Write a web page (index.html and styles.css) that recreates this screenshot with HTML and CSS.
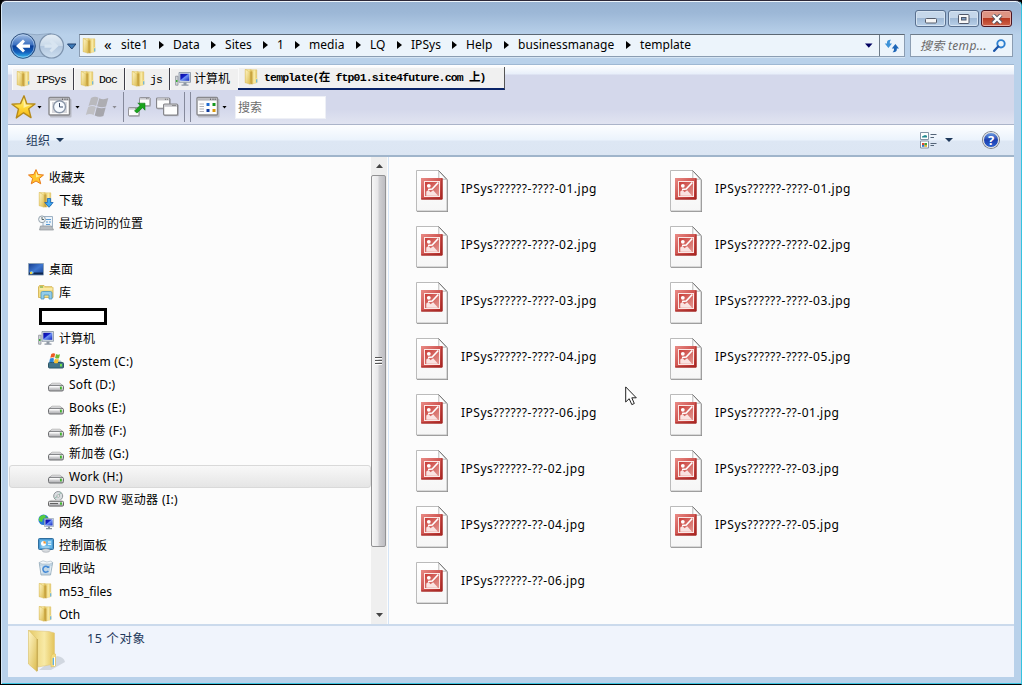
FILE: index.html
```html
<!DOCTYPE html>
<html lang="zh-CN">
<head>
<meta charset="utf-8">
<title>template</title>
<link rel="stylesheet" href="styles.css">
</head>
<body>
<svg class="defs" aria-hidden="true">
  <defs>
    <linearGradient id="gold" x1="0" y1="0" x2="1" y2="0"><stop offset="0" stop-color="#e6ca68"/><stop offset=".6" stop-color="#f8eaa6"/><stop offset="1" stop-color="#e3c35a"/></linearGradient>
    <linearGradient id="goldFront" x1="0" y1="0" x2="1" y2="1"><stop offset="0" stop-color="#fff6c8"/><stop offset="1" stop-color="#dcbc50"/></linearGradient>
    <linearGradient id="grey" x1="0" y1="0" x2="0" y2="1"><stop offset="0" stop-color="#fafafa"/><stop offset="1" stop-color="#a9a9ad"/></linearGradient>
    <linearGradient id="starFill" x1="0" y1="0" x2="0" y2="1"><stop offset="0" stop-color="#fff6a0"/><stop offset=".5" stop-color="#ffdc3c"/><stop offset="1" stop-color="#f4b012"/></linearGradient>
    <linearGradient id="screen" x1="0" y1="0" x2="1" y2="1"><stop offset="0" stop-color="#0a0a9c"/><stop offset=".4" stop-color="#1420c8"/><stop offset=".5" stop-color="#6f93f4"/><stop offset="1" stop-color="#1024c0"/></linearGradient>
    <linearGradient id="desk" x1="0" y1="0" x2="1" y2="1"><stop offset="0" stop-color="#153c8c"/><stop offset=".5" stop-color="#3f77d0"/><stop offset="1" stop-color="#17408f"/></linearGradient>
    <linearGradient id="red" x1="0" y1="0" x2="1" y2="1"><stop offset="0" stop-color="#e98a85"/><stop offset=".5" stop-color="#cf5551"/><stop offset="1" stop-color="#ac2421"/></linearGradient>
    <linearGradient id="redInner" x1="0" y1="0" x2="1" y2="1"><stop offset="0" stop-color="#c83a35"/><stop offset="1" stop-color="#e49a94"/></linearGradient>
    <linearGradient id="page" x1="0" y1="0" x2="0" y2="1"><stop offset="0" stop-color="#fff"/><stop offset="1" stop-color="#f6f6f6"/></linearGradient>
    <linearGradient id="backFill" x1="0" y1="0" x2="0" y2="1"><stop offset="0" stop-color="#a9c3e6"/><stop offset=".45" stop-color="#3a6fc0"/><stop offset=".5" stop-color="#0b3f98"/><stop offset=".75" stop-color="#1460bc"/><stop offset="1" stop-color="#38c4f6"/></linearGradient>
    <linearGradient id="fwdFill" x1="0" y1="0" x2="0" y2="1"><stop offset="0" stop-color="#e6eef6"/><stop offset=".48" stop-color="#c9d9e9"/><stop offset=".52" stop-color="#b3c7de"/><stop offset="1" stop-color="#cddff0"/></linearGradient>

    <symbol id="folder" viewBox="0 0 16 16">
      <path d="M7 .8H12.8V13.6L8 15Z" fill="url(#gold)" stroke="#e0c670" stroke-width=".5"/>
      <path d="M1.3 .4H7V13.5L1.3 13.8Z" fill="url(#gold)" stroke="#dcc068" stroke-width=".5"/>
      <path d="M1.3 .4 6 3V15.3L1.3 13.6Z" fill="url(#goldFront)" stroke="#d6b850" stroke-width=".4"/>
      <path d="M6.9 2.2 8.4 2.6V15.3L6.2 15.3V3Z" fill="#c9a440"/>
      <path d="M10.8 10Q11.5 8.6 13.3 9V13.6L10.8 14.6Z" fill="#f5e08c"/><path d="M12.7 10.2V13.6" stroke="#5fb0e4" stroke-width="1.1"/>
    </symbol>
    <symbol id="star" viewBox="0 0 16 16">
      <path d="M8 .6 10.1 5.5 15.5 6 11.3 9.5 12.7 14.8 8 12 3.3 14.8 4.6 9.5.5 6 5.8 5.5Z" fill="#ffc62e" stroke="#e87a1a" stroke-linejoin="round"/>
      <path d="M8 2.5 9.5 6.3 13 6.7 8 8.5Z" fill="#fff0a0"/>
    </symbol>
    <symbol id="download" viewBox="0 0 16 16">
      <use href="#folder" width="16" height="16"/>
      <path d="M9.4 6.5h3.2v4h2.5L11 15.3 6.8 10.5h2.6Z" fill="#3fa8f0" stroke="#1560b4" stroke-width=".8"/>
    </symbol>
    <symbol id="recent" viewBox="0 0 16 16">
      <path d="M5 1.5H14.5V12H5Z" fill="#edf4fa" stroke="#9db1c4"/>
      <path d="M2.5 11H13.5L15.5 15H1.5Z" fill="#b8bcc0" stroke="#8d9499" stroke-width=".7"/>
      <path d="M8 4.5h5M8 7h2m1 0h2M8 9.5h4" stroke="#5a9bd4"/>
      <circle cx="4" cy="4.3" r="3.4" fill="#f1f4f6" stroke="#94a2ad"/>
      <path d="M4 2v2.5h2" fill="none" stroke="#566"/>
    </symbol>
    <symbol id="desktop" viewBox="0 0 16 16">
      <path d="M.5 2.5H15.5V14H.5Z" fill="url(#desk)" stroke="#8ea3b8"/>
      <path d="M1 12.5H15" stroke="#10284e" stroke-width="2"/>
      <path d="M2 11 4 10l2 2-2 1Z" fill="#83cef4"/><circle cx="3" cy="12" r="1.2" fill="#f3d347"/>
    </symbol>
    <symbol id="library" viewBox="0 0 16 16">
      <path d="M.5 3V13.5H15V3.7L14 2.7H7L6 1.5H1.5Z" fill="#f4dd83" stroke="#ceac48" stroke-width=".8"/>
      <path d="M1.5 5H14.5" stroke="#fff6c6"/><path d="M2 3h3" stroke="#59a84b"/>
      <path d="M3 15V9Q3 7.5 4.5 7.5h8Q14 7.5 14 9v6h-3v-4H6v4Z" fill="#93cdea" stroke="#4d95bf" stroke-width=".8"/>
    </symbol>
    <symbol id="computer" viewBox="0 0 16 16">
      <path d="M.6 5.2h2.4v9H.6Z" fill="#d5d8dc" stroke="#81878f" stroke-width=".7"/><path d="M1 10h1.5" stroke="#3caf34" stroke-width="2"/>
      <path d="M4 1.5H15.5V11.3H4Z" fill="#d7dfe8" stroke="#8491a0" stroke-width=".8"/>
      <path d="M5.3 2.8h9v7h-9Z" fill="url(#screen)"/>
      <path d="M8.5 11.5h3v2h2v1.3h-7v-1.3h2Z" fill="#8e98a4"/>
    </symbol>
    <symbol id="drive" viewBox="0 0 16 16">
      <path d="M1 9.7 4 7.2h8l3 2.5Z" fill="#eeeeef" stroke="#a2a2a4" stroke-width=".7"/>
      <rect x=".5" y="9.3" width="15" height="5.7" rx="1.5" fill="url(#grey)" stroke="#6f7073"/>
      <path d="M2 10.8h9" stroke="#fff"/><rect x="12" y="10.6" width="1.8" height="2.8" fill="#41b52e"/>
    </symbol>
    <symbol id="sysdrive" viewBox="0 0 16 16">
      <path d="M1 10 3.5 7.5h9L15 10Z" fill="#9cbfca"/>
      <rect x=".5" y="9.5" width="15" height="5.5" rx="1" fill="#427488" stroke="#2e5667"/><rect x="12" y="11" width="2" height="2.5" fill="#6be04c"/>
      <path d="M3.3.9Q5.5-.3 7.2.7L6.3 4.6Q4.3 3.8 2.3 4.8Z" fill="#ee5a22"/><path d="M8 1.1Q10 2.3 12 1.3L11 5.2Q9 6 7.1 4.9Z" fill="#74b831"/><path d="M2 5.6Q4.2 4.6 6 5.5L5.1 9.5Q3 8.7 1.2 9.6Z" fill="#2b86d8"/><path d="M6.9 5.8Q8.8 6.8 10.8 6L9.8 9.9Q7.8 10.7 6 9.7Z" fill="#fac02d"/>
    </symbol>
    <symbol id="dvd" viewBox="0 0 16 16">
      <circle cx="10.2" cy="5" r="4.5" fill="#d9dde0" stroke="#909699"/><path d="M10.2 5 13 1.5M10.2 5 7 7" stroke="#8cc3ac"/><circle cx="10.2" cy="5" r="1.3" fill="#fff" stroke="#888" stroke-width=".6"/>
      <path d="M1 11 3 8.7h10l2 2.3Z" fill="#ddd"/><rect x=".5" y="10.3" width="15" height="4.8" rx="1" fill="url(#grey)" stroke="#666"/><path d="M2 12.6h8" stroke="#555"/><rect x="12" y="11.4" width="2" height="2.3" fill="#41b52e"/>
    </symbol>
    <symbol id="network" viewBox="0 0 16 16">
      <circle cx="5.6" cy="5.7" r="5.2" fill="#2579d6"/><path d="M1 4Q3 .5 7 1L8 3 5 5 4 8 1 7Z" fill="#58ce3b"/><path d="M7 4 10 3v4H7Z" fill="#46b839"/>
      <path d="M6.5 4.5h9v8h-9Z" fill="#dbe4ee" stroke="#8998a8" stroke-width=".6"/><path d="M7.4 5.5h7.2v6H7.4Z" fill="url(#screen)"/><path d="M10 12.5h2v1.5h2v1.2H8V14h2Z" fill="#86909c"/>
    </symbol>
    <symbol id="control" viewBox="0 0 16 16">
      <rect x=".5" y="1.5" width="15" height="11" rx="1" fill="#4c9ad2" stroke="#2f6e9e"/><path d="M2 3h12v8H2Z" fill="#65b6e8"/>
      <circle cx="5.5" cy="6.5" r="2.5" fill="#fff"/><path d="M5.5 6.5V4a2.5 2.5 0 0 1 2.5 2.5Z" fill="#f09532"/><path d="M10 5h3.2M10 7.3h3.2" stroke="#fff"/><path d="M3.5 10h8" stroke="#c2e4f7"/>
      <ellipse cx="8" cy="13.5" rx="4" ry="1.8" fill="#d8dce0" stroke="#90979e" stroke-width=".5"/>
    </symbol>
    <symbol id="recycle" viewBox="0 0 16 16">
      <path d="M1.2 2.5 3 15h9.5L14.7 2.5Z" fill="#c3d7e6" stroke="#92a8b8" stroke-width=".8"/><path d="M1.2 2.5 5 .8 9 2l4-1 1.7 1.5L12 4H4Z" fill="#f2f7fa" stroke="#a5b5c2" stroke-width=".6"/>
      <path d="M10 7.3A2.9 2.9 0 1 0 10.3 10.8" fill="none" stroke="#4288d6" stroke-width="1.5"/><path d="M8.5 8h2.8V5.5Z" fill="#4288d6"/><path d="M3 6 4 13M13 6l-1.2 7" stroke="#fff" stroke-width=".6"/>
    </symbol>
    <symbol id="jpg" viewBox="0 0 32 42">
      <path d="M1 41.4H31.4V10" fill="none" stroke="#8e8e8e" stroke-width="1.2"/>
      <path d="M.5.5H22.5L31 9.5V41H.5Z" fill="url(#page)" stroke="#b3b3b3" stroke-width=".9"/>
      <path d="M22.5.5 31 9.5" stroke="#666" stroke-width=".9"/>
      <path d="M22.8 1V9.2H30.5" fill="none" stroke="#aaa" stroke-width=".8"/>
      <rect x="5" y="8" width="21.5" height="21.5" fill="url(#red)"/>
      <path d="M5.5 29h20.5v-20.5" fill="none" stroke="#a02622"/>
      <rect x="8.5" y="11.5" width="15" height="15" fill="url(#redInner)" stroke="#fbe9e7"/>
      <circle cx="12.8" cy="15.8" r="1.9" fill="#fff"/><path d="M22.3 12.5 16.2 19 12 19.5" fill="none" stroke="#fff" stroke-width="1.6"/><path d="M10.3 25.8V21.5L12.5 20 14.5 22.3 17.2 20.2 22 25.8Z" fill="#fae3e1"/>
    </symbol>
    <symbol id="win" viewBox="0 0 16 13">
      <rect x="1.3" y="1.3" width="14.5" height="11.5" rx="1" fill="#8d8d92" opacity=".5"/>
      <rect x=".6" y=".6" width="14" height="11" rx="1" fill="#fdfdfd" stroke="#85858a" stroke-width="1.2"/><path d="M1.2 2.3H14" stroke="#c6c6cb" stroke-width="2"/><path d="M9.5 2h1m1 0h1" stroke="#555"/>
    </symbol>
    <symbol id="bigwin" viewBox="0 0 24 22">
      <rect x="2" y="3" width="21.5" height="18.5" rx="1" fill="#888" opacity=".4"/>
      <rect x="1" y="1.5" width="20.5" height="17.5" rx="1" fill="#fdfdfd" stroke="#88888c" stroke-width="1.4"/><path d="M1.7 3.4H21" stroke="#b5b5ba" stroke-width="2.4"/><path d="M14 3.2h1m1.5 0h1m1.2 0h1" stroke="#444"/>
    </symbol>
  </defs>
</svg>

<div class="window">
  <header class="titlebar">
    <div class="caption">
      <div class="capbtn"><svg width="12" height="6"><rect x=".5" y=".5" width="11" height="4.5" rx="1" fill="#f5f5f5" stroke="#555c6a"/></svg></div>
      <div class="capbtn"><svg width="12" height="10"><rect x=".5" y=".5" width="10.5" height="9" rx="1" fill="#f8f8f8" stroke="#50586a"/><rect x="3.5" y="3.5" width="4.5" height="2.5" fill="#7f9fc4" stroke="#50586a"/></svg></div>
      <div class="capbtn close"><svg width="12" height="10" viewBox="0 0 12 10"><path d="M2 1 10 9M10 1 2 9" stroke="#5a5560" stroke-width="4.2"/><path d="M2 1 10 9M10 1 2 9" stroke="#fff" stroke-width="2.4"/></svg></div>
    </div>
    <div class="navrow">
      <svg class="navbtns" width="68" height="30" viewBox="0 0 68 30">
        <path d="M15 2.5Q29 5 43 2.5V25.5H15Z" fill="#a8bfd9" stroke="#8ba3bf" stroke-width=".8"/>
        <circle cx="15" cy="15" r="12.3" fill="url(#backFill)" stroke="#31527f"/>
        <circle cx="15" cy="15" r="11.2" fill="none" stroke="#c4dcf4" stroke-width=".7" opacity=".8"/>
        <path d="M8 15 15 8.5 17 10.6 14.5 13.4H22v3.4h-7.5L17 19.4 15 21.5Z" fill="#fff"/>
        <circle cx="43.5" cy="15" r="12" fill="url(#fwdFill)" stroke="#7d93ad" stroke-width="1.2"/>
        <path d="M50.5 15 43.5 8.5 41.5 10.6 44 13.4H36.5v3.4H44L41.5 19.4 43.5 21.5Z" fill="#d8e5f1"/>
        <path d="M59.5 13H68L63.8 18Z" fill="#3d7bb9" stroke="#20406e"/>
      </svg>
      <div class="address">
        <svg class="addr-folder" width="16" height="16"><use href="#folder"/></svg>
        <span class="chev">«</span>
        <nav class="crumbs">
          <span>site1</span><span>Data</span><span>Sites</span><span>1</span><span>media</span><span>LQ</span><span>IPSys</span><span>Help</span><span>businessmanage</span><span>template</span>
        </nav>
        <svg class="addr-drop" width="8" height="5"><path d="M0 .5H7.5L3.8 4.7Z" fill="#000060"/></svg>
        <div class="refresh"><svg width="16" height="14" viewBox="0 0 16 14"><path d="M7 .8Q3 .5 3 3.5V4.6H.8L4.4 9 8 4.6H5.8V3.5Q5.8 2 7 .8Z" fill="#3c92d8"/><path d="M8.5 13.2Q12.8 13.5 12.8 10.5V9.4H15L11.4 5 7.8 9.4H10V10.5Q10 12 8.5 13.2Z" fill="#1e66b8"/></svg></div>
      </div>
      <div class="search"><span>搜索 temp...</span><svg width="13" height="13"><circle cx="8" cy="4.8" r="3.7" fill="#eaf5fd" stroke="#2d7fd0" stroke-width="1.9"/><path d="M5.2 7.5 1.2 11.8" stroke="#1c55a8" stroke-width="2.3" stroke-linecap="round"/></svg></div>
    </div>
  </header>

  <section class="client">
    <div class="linkbars">
      <div class="tabs">
        <div class="tab t1"><svg width="16" height="16"><use href="#folder"/></svg><span>IPSys</span></div>
        <div class="tab t2"><svg width="16" height="16"><use href="#folder"/></svg><span>Doc</span></div>
        <div class="tab t3"><svg width="16" height="16"><use href="#folder"/></svg><span>js</span></div>
        <div class="tab t4"><svg width="16" height="16"><use href="#computer"/></svg><span>计算机</span></div>
        <div class="tab active"><svg width="16" height="16"><use href="#folder"/></svg><span>template(在 ftp01.site4future.com 上)</span></div>
      </div>
      <div class="tools">
        <svg class="favstar" width="26" height="26" viewBox="0 0 26 26"><path d="M13 1.8 15.8 9.7 24 10 17.7 14.7 20 23.6 12.6 18.8 5.3 23.9 7.5 15 1 10.2 9.5 9.6Z" fill="url(#starFill)" stroke="#b58a1c" stroke-width="1.4" stroke-linejoin="round"/><path d="M13 5 14.5 10.8H20L12.5 14Z" fill="#fff" opacity=".5"/></svg>
        <i class="caret c1"></i>
        <svg width="24" height="22" viewBox="0 0 24 22"><use href="#bigwin" width="24" height="22"/><path d="M4 6H19V17H4Z" fill="#d8d8dc"/><circle cx="11.5" cy="10.8" r="6" fill="#f6faff" stroke="#8a96a8" stroke-width="1.4"/><path d="M11.5 7v4H15" fill="none" stroke="#3a4a66"/></svg>
        <i class="caret c2"></i>
        <svg width="24" height="22" viewBox="0 0 24 22"><path d="M6 2Q10-.2 13.5 1.8L11.2 10Q7.5 8 3.5 10Z" fill="#b9b9bd"/><path d="M14.3 2.2Q18.5 4.2 23.3 2L21 10.5Q17 12 12.1 10.3Z" fill="#adadb2"/><path d="M3.2 10.9Q7.5 9 10.9 10.9L8.7 19Q5 17 .8 19Z" fill="#c0c0c4"/><path d="M11.8 11.2Q16.5 13 20.7 11.4L18.4 20Q14.5 21.6 9.7 19.4Z" fill="#a6a6ac"/></svg>
        <i class="caret c3"></i>
        <b class="sep s1"></b>
        <svg class="gotoicon" width="23" height="24" viewBox="0 0 23 24"><use href="#win" x="11" y="1" width="12" height="12"/><use href="#win" x="0" y="11" width="12" height="12"/><path d="M6.5 16 12.2 10.3 9.8 8.2H17V15.2L14.6 12.7 9 18Z" fill="#18a51c" stroke="#0b7811" stroke-width=".6"/></svg>
        <svg class="cascade" width="24" height="22" viewBox="0 0 24 22"><use href="#win" x="0" y="1" width="15" height="13"/><use href="#win" x="7" y="7" width="16" height="14"/></svg>
        <b class="sep s2"></b><b class="sep s3"></b>
        <svg class="viewicon" width="24" height="22" viewBox="0 0 24 22"><use href="#bigwin" width="24" height="22"/><path d="M3.5 8H8M3.5 10.5H8M3.5 13H8M3.5 15.5H8" stroke="#b1b1b6"/><path d="M10.5 7h3v3h-3Z" fill="#1e6ad0"/><path d="M16.5 7h3v3h-3Z" fill="#13961c"/><path d="M10.5 13h3v3h-3Z" fill="#113b9c"/><path d="M16.5 13h3v3h-3Z" fill="#d8960c"/></svg>
        <i class="caret c4"></i>
        <div class="quick">搜索</div>
      </div>
    </div>

    <div class="command">
      <span class="organize">组织</span><i class="bigcaret"></i>
      <svg class="views" width="17" height="17" viewBox="0 0 17 17"><path d="M.5.5h8v7h-8Zm0 8.5h8v7h-8Z" fill="#fff" stroke="#8394a5"/><path d="M2 5.5h5V3.8L5 3 2 4.5Z" fill="#238a91"/><path d="M2 11h2.5v2H2Z" fill="#dc4634"/><path d="M4.5 11H7v2H4.5Z" fill="#41a541"/><path d="M2 13h2.5v1.8H2Z" fill="#2c79c8"/><path d="M4.5 13H7v1.8H4.5Z" fill="#e3b22b"/><path d="M10.5 2.5H16.5M10.5 5.5H14M10.5 11.5H16.5M10.5 13.5H14" stroke="#546579"/></svg>
      <i class="bigcaret second"></i>
      <div class="help">?</div>
    </div>

    <div class="main">
      <aside class="tree">
        <div class="row"><svg width="16" height="16"><use href="#star"/></svg>收藏夹</div>
        <div class="row l2"><svg width="16" height="16"><use href="#download"/></svg>下载</div>
        <div class="row l2"><svg width="16" height="16"><use href="#recent"/></svg>最近访问的位置</div>
        <div class="row"></div>
        <div class="row"><svg width="16" height="16"><use href="#desktop"/></svg>桌面</div>
        <div class="row l2"><svg width="16" height="16"><use href="#library"/></svg>库</div>
        <div class="row l2"><div class="redacted"></div></div>
        <div class="row l2"><svg width="16" height="16"><use href="#computer"/></svg>计算机</div>
        <div class="row l3"><svg width="16" height="16"><use href="#sysdrive"/></svg>System (C:)</div>
        <div class="row l3"><svg width="16" height="16"><use href="#drive"/></svg>Soft (D:)</div>
        <div class="row l3"><svg width="16" height="16"><use href="#drive"/></svg>Books (E:)</div>
        <div class="row l3"><svg width="16" height="16"><use href="#drive"/></svg>新加卷 (F:)</div>
        <div class="row l3"><svg width="16" height="16"><use href="#drive"/></svg>新加卷 (G:)</div>
        <div class="row l3 selected"><svg width="16" height="16"><use href="#drive"/></svg>Work (H:)</div>
        <div class="row l3 disc"><svg width="16" height="16"><use href="#dvd"/></svg>DVD RW 驱动器 (I:)</div>
        <div class="row l2"><svg width="16" height="16"><use href="#network"/></svg>网络</div>
        <div class="row l2"><svg width="16" height="16"><use href="#control"/></svg>控制面板</div>
        <div class="row l2"><svg width="16" height="16"><use href="#recycle"/></svg>回收站</div>
        <div class="row l2"><svg width="16" height="16"><use href="#folder"/></svg>m53_files</div>
        <div class="row l2"><svg width="16" height="16"><use href="#folder"/></svg>Oth</div>
      </aside>
      <div class="scroll">
        <div class="sbtn"><svg width="7" height="4"><path d="M0 4 3.5 0 7 4Z" fill="#444"/></svg></div>
        <div class="thumb"><svg width="7" height="8"><path d="M0 .5h7M0 3.5h7M0 6.5h7" stroke="#555"/><path d="M0 1.5h7M0 4.5h7M0 7.5h7" stroke="#fff"/></svg></div>
        <div class="sbtn down"><svg width="7" height="4"><path d="M0 0 3.5 4 7 0Z" fill="#444"/></svg></div>
      </div>
      <div class="files">
        <div class="file"><svg width="32" height="42"><use href="#jpg"/></svg>IPSys??????-????-01.jpg</div>
        <div class="file"><svg width="32" height="42"><use href="#jpg"/></svg>IPSys??????-????-01.jpg</div>
        <div class="file"><svg width="32" height="42"><use href="#jpg"/></svg>IPSys??????-????-02.jpg</div>
        <div class="file"><svg width="32" height="42"><use href="#jpg"/></svg>IPSys??????-????-02.jpg</div>
        <div class="file"><svg width="32" height="42"><use href="#jpg"/></svg>IPSys??????-????-03.jpg</div>
        <div class="file"><svg width="32" height="42"><use href="#jpg"/></svg>IPSys??????-????-03.jpg</div>
        <div class="file"><svg width="32" height="42"><use href="#jpg"/></svg>IPSys??????-????-04.jpg</div>
        <div class="file"><svg width="32" height="42"><use href="#jpg"/></svg>IPSys??????-????-05.jpg</div>
        <div class="file"><svg width="32" height="42"><use href="#jpg"/></svg>IPSys??????-????-06.jpg</div>
        <div class="file"><svg width="32" height="42"><use href="#jpg"/></svg>IPSys??????-??-01.jpg</div>
        <div class="file"><svg width="32" height="42"><use href="#jpg"/></svg>IPSys??????-??-02.jpg</div>
        <div class="file"><svg width="32" height="42"><use href="#jpg"/></svg>IPSys??????-??-03.jpg</div>
        <div class="file"><svg width="32" height="42"><use href="#jpg"/></svg>IPSys??????-??-04.jpg</div>
        <div class="file"><svg width="32" height="42"><use href="#jpg"/></svg>IPSys??????-??-05.jpg</div>
        <div class="file"><svg width="32" height="42"><use href="#jpg"/></svg>IPSys??????-??-06.jpg</div>
      </div>
    </div>

    <footer class="details">
      <svg width="42" height="44" viewBox="0 0 42 44">
        <path d="M12 41 30 27Q37 28 38 33L24 41Z" fill="#8b94a0" opacity=".3"/>
        <path d="M2 1.5 22 2.5 27.5 4V35L11 38Z" fill="url(#gold)" stroke="#e0c87c" stroke-width=".6"/>
        <path d="M1.5 1 10 10V42.5L1.5 35Z" fill="url(#goldFront)" stroke="#d8bd62" stroke-width=".6"/>
        <path d="M10.3 10V42" stroke="#b99b43" stroke-width=".8"/>
        <path d="M24 38V28Q25 24 28.5 25V37Z" fill="#f3dc81" stroke="#e0c05a" stroke-width=".6"/><path d="M26.5 29V36" stroke="#5daee6" stroke-width="1.6"/><path d="M27.5 28V37" stroke="#fff"/>
      </svg>
      <span>15 个对象</span>
    </footer>
  </section>
  <svg class="cursor" width="13" height="20" viewBox="0 0 13 20"><path d="M.7.9V16L4.2 12.7 6.8 18.6 9.3 17.5 6.8 11.8H11.3Z" fill="#fff" stroke="#222"/></svg>
</div>
</body>
</html>
```

FILE: styles.css
```css
* { box-sizing: border-box; }
body {
  margin: 0;
  background: #000;
  font: 12px/16px "Noto Sans", "Noto Sans CJK SC", sans-serif;
  color: #000;
  overflow: hidden;
}
svg { display: block; flex: none; }
.defs { position: absolute; width: 0; height: 0; }
.window {
  position: relative;
  display: flex;
  flex-direction: column;
  width: 1022px;
  height: 685px;
  padding: 1px 7px 7px;
  border: 1px solid #000;
  border-top-color: #2c2838;
  border-right-color: #35c3e0;
  border-radius: 6px 6px 0 0;
  box-shadow: inset 0 1px #eef5fb, inset 1px 0 #d9e9f7, inset 0 -1px #3ec5e2;
  background: linear-gradient(#98b3d2 0, #9db8d7 12px, #b9d1ea 34px, #b9d1ea 100%);
}

/* Caption buttons and navigation */
.titlebar { height: 62px; flex: none; }
.caption { display: flex; justify-content: flex-end; gap: 2px; padding: 8px 2px 0 0; height: 32px; }
.capbtn {
  display: flex;
  align-items: center;
  justify-content: center;
  width: 31px;
  height: 17px;
  border: 1px solid #59708f;
  border-radius: 3px;
  box-shadow: inset 0 0 0 1px #d6e4f2;
  background: linear-gradient(#c5d7ea 50%, #9fb9d6 50%, #b9d0e8);
}
.capbtn:first-child { padding-top: 4px; }
.capbtn.close {
  border-color: #4b1520;
  box-shadow: inset 0 0 0 1px #e9aaa0;
  background: linear-gradient(#dd9484 48%, #b83a22 50%, #cf6449);
}
.navrow { display: flex; height: 23px; }
.navbtns { margin: -3px 3px 0 0; }
.address {
  display: flex;
  align-items: center;
  width: 826px;
  height: 23px;
  border: 1px solid #8b9db2;
  border-top-color: #5c6773;
  box-shadow: 0 1px #d4e4f3;
  background: #ecf4fb;
}
.addr-folder { margin-left: 2px; }
.chev { width: 12px; margin-left: 6px; font-size: 15px; line-height: 16px; padding-bottom: 3px; }
.crumbs {
  display: grid;
  grid-template-columns: 52px 52px 52px 32px 61px 41px 55px 52px 122px 1fr;
  flex: 1;
  margin-left: 5px;
  font-size: 12px;
  padding-bottom: 1px;
  letter-spacing: .05px;
}
.crumbs span { display: flex; align-items: center; justify-content: space-between; white-space: nowrap; }
.crumbs span:not(:last-child)::after {
  content: "";
  margin-right: 9px;
  border: solid transparent;
  border-width: 4px 0 4px 5px;
  border-left-color: #000;
}
.addr-drop { margin-right: 6px; }
.refresh { display: flex; align-items: center; justify-content: center; width: 25px; height: 21px; border-left: 1px solid #6d7b89; }
.search {
  display: flex;
  align-items: center;
  justify-content: space-between;
  width: 103px;
  height: 23px;
  margin-left: 5px;
  padding: 0 6px 0 9px;
  border: 1px solid #8b9db2;
  border-top-color: #6d7b89;
  background: #ecf4fb;
  color: #6a6a6a;
  font-style: italic;
  letter-spacing: .3px;
  white-space: nowrap;
}

/* Client area */
.client {
  display: flex;
  flex-direction: column;
  flex: 1;
  min-height: 0;
  width: 1006px;
  background: #fcfcfc;
}
.linkbars {
  height: 61px;
  flex: none;
  padding: 2px 4px 0;
  border-top: 1px solid #9fb8d3;
  border-bottom: 1px solid #abb4c9;
  background: linear-gradient(#fff 0, #e8effa 9px, #d4d8eb 10px, #d4d8eb 75%, #e1e4f1 100%);
}
.tabs {
  display: flex;
  height: 23px;
  align-items: flex-end;
  font: 11.5px/16px "Liberation Mono", "Noto Sans CJK SC", monospace;
  letter-spacing: -.9px;
}
.tab { display: flex; align-items: center; height: 22px; gap: 3px; padding-left: 4px; background: #f0f0f0; border-right: 1px solid #3e3e48; white-space: nowrap; box-shadow: inset 1px 1px #fafafa; }
.tab span { padding-top: 2px; }
.tab svg { margin-bottom: 1px; }
.t1 { width: 62px; gap: 4px; }
.t2 { width: 51px; padding-left: 6px; }
.t3 { width: 45px; padding-left: 6px; }
.t4 { width: 68px; padding-left: 5px; border-right: 0; letter-spacing: 0; font-size: 12px; }
.active { width: 267px; height: 23px; padding-left: 6px; gap: 4px; font-weight: bold; letter-spacing: -.83px; border-right: 1px solid #555; border-bottom: 2px solid #0a2468; }
.active span { padding-top: 0; }
.tools { display: flex; align-items: center; height: 34px; }
.favstar { margin-left: -1px; }
.caret { width: 5px; height: 3px; background: #000; clip-path: polygon(0 0, 100% 0, 50% 100%); }
.c1 { margin-right: 6px; }
.c2 { margin: 0 5px 0 3px; }
.c3 { margin-left: 3px; background: #8c8c94; }
.c4 { margin: 0 8px 0 2px; }
.sep { width: 1px; height: 30px; background: #85899b; }
.s1 { margin: 0 4px 0 6px; }
.cascade { margin-left: 5px; }
.s2 { margin: 0 5px 0 4px; }
.s3 { margin-right: 5px; }
.quick { width: 91px; height: 23px; padding: 3px 2px; background: #fff; border: 1px solid #eef0f6; color: #6d6d6d; }

.command {
  display: flex;
  align-items: center;
  height: 32px;
  flex: none;
  padding-left: 18px;
  border-bottom: 2px solid #a0b5cb;
  background: linear-gradient(#fdfeff 0, #ebf3fc 15px, #dde7f4 16px, #dce6f3 100%);
  color: #1e395b;
}
.organize { padding-top: 1px; }
.bigcaret { width: 8px; height: 4px; margin-left: 6px; background: #1e395b; clip-path: polygon(0 0, 100% 0, 50% 100%); }
.views { margin-left: 856px; }
.second { margin-left: 8px; }
.help {
  width: 16px;
  height: 16px;
  margin-left: 30px;
  border: 1px solid #ddd;
  border-radius: 50%;
  box-shadow: 0 0 0 1px #7b7f88;
  background: linear-gradient(#6d9be2, #1c3fae 50%, #2a5fd0);
  color: #fff;
  font-weight: bold;
  font-size: 13px;
  line-height: 14px;
  text-align: center;
}

.main { display: flex; height: 467px; flex: none; overflow: hidden; }
.tree { width: 363px; padding-top: 9px; overflow: hidden; }
.row { display: flex; align-items: center; gap: 5px; height: 23px; padding: 1px 0 0 20px; white-space: nowrap; }
.row svg { margin-top: -3px; }
.row.l2 { padding-left: 30px; }
.row.l3 { padding: 0 0 0 40px; letter-spacing: .2px; }
.row.l3 svg { margin-top: -1px; }
.row.disc { letter-spacing: .4px; }
.row.l3.selected { margin-left: 1px; padding-left: 38px; border: 1px solid #d9d9d9; border-radius: 3px; background: linear-gradient(#f8f8f8, #e5e5e5); }
.redacted { width: 68px; height: 17px; margin-left: 1px; border: 3px solid #000; background: #fff; }
.scroll { display: flex; flex-direction: column; width: 16px; background: #efefef; }
.sbtn { display: flex; align-items: center; justify-content: center; height: 18px; flex: none; }
.thumb {
  display: flex;
  align-items: center;
  justify-content: center;
  width: 15px;
  height: 372px;
  border: 1px solid #929294;
  border-radius: 2px;
  background: linear-gradient(90deg, #f6f6f6 0, #e8e8ea 45%, #d0d0d3 55%, #bdbdc2);
}
.down { margin-top: auto; }
.files {
  display: grid;
  grid-template-columns: 254px 254px;
  grid-auto-rows: 56px;
  flex: 1;
  align-content: start;
  margin-left: 1px;
  padding: 13px 0 0 27px;
  border-left: 1px solid #d5e4f5;
}
.file { display: flex; gap: 13px; line-height: 38px; white-space: nowrap; letter-spacing: .5px; }

.details { display: flex; flex: 1; padding: 3px 0 0 19px; border-top: 2px solid #cbdaec; background: #f0f4fc; color: #1e395b; }
.details span { margin-left: 18px; line-height: 19px; font-size: 12.5px; letter-spacing: .6px; }
.cursor { position: absolute; left: 624px; top: 385px; }
```
